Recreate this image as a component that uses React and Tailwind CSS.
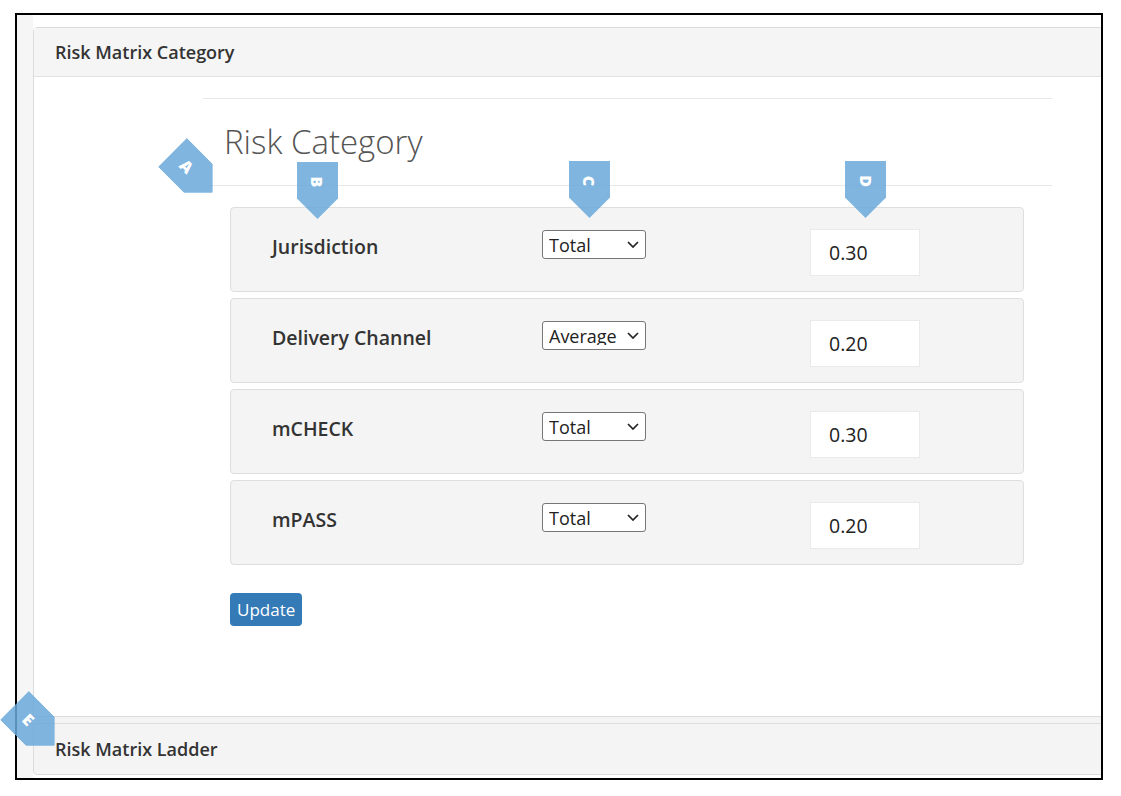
import React from "react";

const rows = [
    { label: "Jurisdiction", mode: "Total", weight: "0.30" },
    { label: "Delivery Channel", mode: "Average", weight: "0.20" },
    { label: "mCHECK", mode: "Total", weight: "0.30" },
    { label: "mPASS", mode: "Total", weight: "0.20" },
];

const Flag = ({ letter, className }) => (
    <div className={`absolute w-[41px] h-[57px] bg-[#6aa8da]/85 [clip-path:polygon(0_0,100%_0,100%_64%,50%_100%,0_64%)] flex justify-center ${className}`}>
        <span className="mt-[11px] h-[18px] rotate-90 text-white text-[16px] font-extrabold leading-[18px]">
            {letter}
        </span>
    </div>
);

const ModeSelect = ({ value }) => (
    <div className="relative w-[104px] h-[29px]">
        <select
            defaultValue={value}
            className="appearance-none w-full h-full bg-white border border-[#767676] rounded-[3px] pl-[6px] text-[18px] font-medium text-[#222] leading-none focus:outline-none"
        >
            <option>Total</option>
            <option>Average</option>
        </select>
        <svg className="absolute right-[7px] top-[11px] pointer-events-none" width="12" height="7" viewBox="0 0 12 7">
            <polyline points="1,1 6,6 11,1" fill="none" stroke="#222" strokeWidth="1.7" />
        </svg>
    </div>
);

const CategoryRow = ({ label, mode, weight }) => (
    <div className="h-[85px] mb-[6px] border border-[#dedede] rounded-[4px] bg-[#f4f4f4] grid grid-cols-[311px_268px_auto]">
        <div className="pl-[41px] mt-[26px] h-[26px] leading-[26px] text-[19.5px] font-[560] text-[#333]">
            {label}
        </div>
        <div className="mt-[22px]">
            <ModeSelect value={mode} />
        </div>
        <div className="mt-[21px]">
            <input
                defaultValue={weight}
                className="w-[110px] h-[47px] bg-white border border-[#eaeaea] pl-[18px] text-[19.5px] font-medium text-[#222] focus:outline-none"
            />
        </div>
    </div>
);

export default function App() {
    return (
        <div
            className="relative w-[1121px] h-[796px] bg-white pl-[15px] pt-[13px]"
            style={{ fontFamily: '"Open Sans", "Liberation Sans", sans-serif' }}
        >
            <div className="w-[1088px] h-[767px] border-2 border-black overflow-hidden flex bg-white">
                <div className="w-[16px] shrink-0 self-stretch bg-[#f6f6f6]" />
                <div className="flex-1 min-w-0 pt-[12px]">
                    <div className="w-[1072px] border border-[#dcdcdc] rounded-tl-[4px]">
                        <div className="h-[49px] bg-[#f5f5f5] border-b border-[#e2e2e2] pl-[21px] flex items-center text-[18px] font-[560] text-[#333]">
                            Risk Matrix Category
                        </div>
                        <div className="h-[639px] bg-white">
                            <div className="ml-[169px] w-[849px] pt-[21px]">
                                <div className="border-t border-[#e8e8e8]" />
                                <div className="h-[87px] flex items-center pl-[21px] border-b border-[#e8e8e8]">
                                    <h1 className="text-[33px] font-light leading-[36px] text-[#555]">
                                        Risk Category
                                    </h1>
                                </div>
                                <div className="ml-[27px] w-[794px] mt-[21px]">
                                    {rows.map(row => (
                                        <CategoryRow key={row.label} {...row} />
                                    ))}
                                    <button className="mt-[22px] h-[33px] px-[7px] bg-[#337ab7] rounded-[4px] text-white text-[17px] leading-none">
                                        Update
                                    </button>
                                </div>
                            </div>
                        </div>
                    </div>
                    <div className="h-[6px] bg-[#f4f4f4]" />
                    <div className="w-[1072px] border border-[#dcdcdc] rounded-bl-[4px] h-[52px] bg-[#f4f4f4] pl-[21px] flex items-center text-[18px] font-[560] text-[#333]">
                        Risk Matrix Ladder
                    </div>
                </div>
            </div>

            <Flag letter="A" className="left-[172px] top-[144px] -rotate-45" />
            <Flag letter="B" className="left-[297px] top-[162px]" />
            <Flag letter="C" className="left-[569px] top-[161px]" />
            <Flag letter="D" className="left-[845px] top-[161px]" />
            <Flag letter="E" className="left-[14px] top-[697px] -rotate-45" />
        </div>
    );
}
